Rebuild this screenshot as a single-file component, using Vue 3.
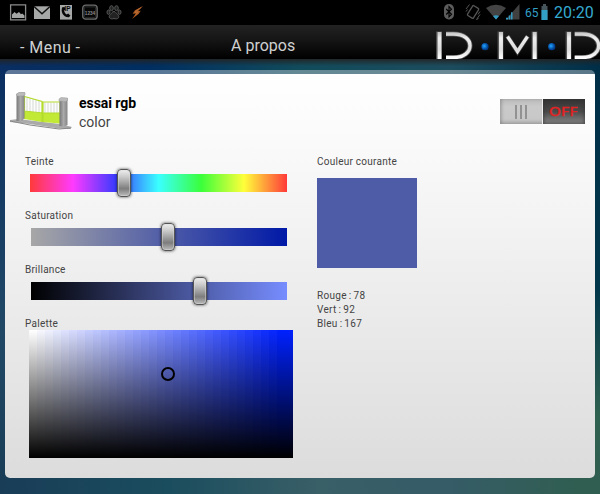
<script setup>
import { ref, computed } from 'vue'

const hue = ref(94)
const saturation = ref(137)
const brightness = ref(169)
const rgb = ref({ red: 78, green: 92, blue: 167 })

const sliders = computed(() => [
  { label: 'Teinte', kind: 'hue', offset: hue.value },
  { label: 'Saturation', kind: 'saturation', offset: saturation.value },
  { label: 'Brillance', kind: 'brightness', offset: brightness.value },
])

// The palette is painted as 33 saturation columns fading to black.
const columns = Array.from({ length: 33 }, (_, i) => {
  const t = Math.min(1, i / 31)
  return `rgb(${Math.round(255 * (1 - t))}, ${Math.round(255 - 222 * t)}, 255)`
})
const swatch = computed(() => `rgb(${rgb.value.red}, ${rgb.value.green}, ${rgb.value.blue})`)
</script>

<template>
  <div class="screen">
    <div class="status">
      <div class="notifications">
        <svg class="ic" width="18" height="18" viewBox="0 0 18 18">
          <path d="M1.6 1.800h15v15h-15z" fill="none" stroke="#8a8c8b" stroke-width="1.300" />
          <path d="M3 15V11.500L5.500 9l2 1.700L10 9l2 2.200 1.200-.6 2.300 2V15z" fill="#a3a5a4" />
        </svg>
        <svg class="ic mail" width="18" height="18" viewBox="0 0 18 18">
          <path d="M1 3.300h16v12.700H1z" fill="#a6a8a7" />
          <path d="M1 3.500l8 7.200 8-7.200" fill="none" stroke="#111" stroke-width="1.500" />
        </svg>
        <svg class="ic call" width="14" height="18" viewBox="0 0 14 18">
          <path d="M1 2h12v14.600H1z" fill="#a6a8a7" />
          <path d="M3.300 4.200C1.300 8 4 14.500 9.800 14.200l1.700-1.500-2.300-2.300-1.500 1C6.300 10.700 5.200 8.700 5.100 7.500l1.300-.9-.8-2.600z" fill="#080808" />
          <text x="5.500" y="8" class="ip">IP</text>
        </svg>
        <svg class="ic lock" width="18" height="18" viewBox="0 0 18 18">
          <rect x="1.700" y="2.200" width="14.500" height="14" rx="3" fill="#151616" stroke="#6a6c6b" stroke-width="1.300" />
          <rect x="3.500" y="4" width="11" height="10.400" rx="1" fill="#050505" stroke="#303231" stroke-width=".7" />
          <text x="3.800" y="11.500" class="digits">1234</text>
        </svg>
        <svg class="ic paw" width="16" height="18" viewBox="0 0 16 18" fill="#222" stroke="#565857" stroke-width="1">
          <ellipse cx="5.500" cy="5.200" rx="1.800" ry="2.500" />
          <ellipse cx="10.500" cy="5.200" rx="1.800" ry="2.500" />
          <ellipse cx="2.500" cy="9.200" rx="1.500" ry="2.200" />
          <ellipse cx="13.500" cy="9.200" rx="1.500" ry="2.200" />
          <path d="M8 8.500c-2 0-2.300 2-3.700 3-2.700 3 .2 5.300 3.700 4 3.500 1.300 6.400-1 3.700-4-1.700-1-2-3-3.700-3z" />
        </svg>
        <svg class="ic bolt" width="14" height="18" viewBox="0 0 14 18">
          <path d="M13 3L5 7.300 2.600 10.800l3.200-.4L2 16l6.800-5.200 1.900-3.100-2.600.2z" fill="#a9561e" />
          <path d="M11.200 4.500L6 7.800l-1 1.700 3-.6-2.500 3.500" fill="none" stroke="#c0763f" stroke-width=".7" />
        </svg>
      </div>
      <div class="system">
        <svg class="bluetooth" width="12" height="16" viewBox="0 0 12 16">
          <rect x="1" width="10" height="15.500" rx="4.800" fill="#5c5c5c" />
          <path d="M3.200 5l5.300 5.300L6 12.800V2.700l2.500 2.500-5.300 5.300" fill="none" stroke="#000" stroke-width="1.100" />
        </svg>
        <svg class="vibrate" width="16" height="18" viewBox="0 0 16 18" fill="none" stroke="#555">
          <rect x="4.500" y="2.200" width="7" height="11.500" rx="1" transform="rotate(32 8 8)" stroke-width="1.300" />
          <path d="M1 5l3.500-4.500M1 7.500L2.500 5.500M15 10.500L11.500 15.500M15 7.500l-2 3M13.500 14L11.500 16" />
        </svg>
        <svg class="wifi" width="20" height="16" viewBox="0 0 20 16">
          <path d="M0 4Q10-2.500 20 4L10 15.500z" fill="#444" />
          <path d="M7 12Q10 10.500 13 12L10 15.500z" fill="#329ac0" />
        </svg>
        <svg class="signal" width="14" height="16" viewBox="0 0 14 16">
          <path d="M13.500 0v15.500H0z" fill="#404040" />
          <path d="M0 15.500v-1.800h2v1.800zM2.700 15.500v-4.100h1.600v4.100zM5 15.500V8.200h1.500v7.300z" fill="#329ac0" />
        </svg>
        <span class="percent">65</span>
        <svg class="battery" width="7" height="16" viewBox="0 0 7 16">
          <path d="M2 0h3v2h1.500v14H.5V2H2z" fill="#45555b" />
          <path d="M.5 6h6v10h-6z" fill="#329fc5" />
        </svg>
        <span class="clock">20:20</span>
      </div>
    </div>

    <header class="bar">
      <span class="menu">- Menu -</span>
      <span class="about">A propos</span>
      <svg class="logo" width="170" height="34" viewBox="430 25 170 34">
        <defs>
          <linearGradient id="metal" x1="0" y1="31" x2="0" y2="59" gradientUnits="userSpaceOnUse">
            <stop offset="0" stop-color="#bbb" />
            <stop offset=".25" stop-color="#eee" />
            <stop offset=".65" stop-color="#ddd" />
            <stop offset="1" stop-color="#fff" />
          </linearGradient>
          <radialGradient id="bead" cx=".4" cy=".4">
            <stop offset="0" stop-color="#22a5ff" />
            <stop offset="1" stop-color="#003f91" />
          </radialGradient>
        </defs>
        <g fill="none" stroke="#555" stroke-width="5.800">
          <path d="M439 31.500v28M500.500 31.500v28M534.500 31.500v28M568.500 31.500v28" />
          <path d="M446 34h7.500C475.500 34 475.500 57.500 453.500 57.500h-7.500M574.700 34h7.500c22 0 22 23.500 0 23.500h-7.500" stroke-width="5" />
          <path d="M507.300 36l10.200 15.800 10.300-15.800" stroke-width="4.600" stroke-opacity=".7" />
        </g>
        <g fill="none" stroke="url(#metal)" stroke-width="3.900">
          <path d="M439.500 32v27.300M501 32v27.300M534.700 32v27.300M569 32v27.300" />
          <path d="M446 34h7.500C475.500 34 475.500 57.500 453.500 57.500h-7.500M574.700 34h7.500c22 0 22 23.500 0 23.500h-7.500" stroke-width="3.400" />
          <path d="M507.500 36.500l10 15 10-15" stroke-width="3.300" />
        </g>
        <circle cx="485" cy="46.700" r="3.600" fill="url(#bead)" />
        <circle cx="551.700" cy="46.700" r="3.600" fill="url(#bead)" />
      </svg>
    </header>

    <main class="stage">
      <section class="panel">
        <div class="device">
          <svg class="gate" width="64" height="40" viewBox="0 0 64 40">
            <defs>
              <linearGradient id="pillar">
                <stop offset="0" stop-color="#777" />
                <stop offset=".5" stop-color="#aaa" />
                <stop offset="1" stop-color="#858585" />
              </linearGradient>
            </defs>
            <path d="M0 29l8-1 42 5 12 3-2 2-11-.5L20 33 0 31z" fill="#aaa" />
            <path d="M0 30l20 4 29 4 12-1" fill="none" stroke="#888" />
            <path d="M14 20l18 2 18 0v10.500L32 31l-18-3z" fill="#c2e936" />
            <path d="M17 6.500V20M20 7v14M23 8v13M26 9v13M29 10v12M35 11.500v10.500M38 11.500v10.500M41 11.500v10.500M44 11.500v10.500M47 11.500v10.500" stroke="#d5d9d2" stroke-width="1" />
            <path d="M14.500 28V5.500L32 10.500V31M33 10.500v20.500M33 11h17v21.500M14 20l19 2h17" fill="none" stroke="#b3dc2c" stroke-width="1.200" />
            <path d="M6.500 3L9 1.500h5.500V27L12 30H6.500z" fill="url(#pillar)" />
            <path d="M6.500 3L9 1.500h6v2.500l-2 1H7z" fill="#bbb" stroke="#999" stroke-width=".5" />
            <path d="M49.500 8.500l2-1.500 6 .5V34l-3 1.500-5-.5z" fill="url(#pillar)" />
            <path d="M49 8L51 6.500l6.500.5V9.500l-2 1-6.500-.5z" fill="#bbb" stroke="#999" stroke-width=".5" />
          </svg>
          <div class="names">
            <strong>essai rgb</strong>
            <span>color</span>
          </div>
          <div class="toggle">
            <div class="grip"><i></i><i></i><i></i></div>
            <div class="off"><span>OFF</span></div>
          </div>
        </div>

        <div class="content">
          <div class="controls">
            <div v-for="s in sliders" :key="s.kind" class="control">
              <label>{{ s.label }}</label>
              <div class="track" :class="s.kind">
                <div class="thumb" :style="{ left: s.offset + 'px' }"></div>
              </div>
            </div>
            <label class="palette-label">Palette</label>
            <div class="palette">
              <div v-for="(c, i) in columns" :key="i" class="column" :style="{ backgroundColor: c }"></div>
              <div class="ring"></div>
            </div>
          </div>

          <div class="current">
            <label>Couleur courante</label>
            <div class="swatch" :style="{ backgroundColor: swatch }"></div>
            <div class="values">
              <span>Rouge : {{ rgb.red }}</span>
              <span>Vert : {{ rgb.green }}</span>
              <span>Bleu : {{ rgb.blue }}</span>
            </div>
          </div>
        </div>
      </section>
    </main>
  </div>
</template>

<style>
body {
  margin: 0;
  overflow: hidden;
}
</style>

<style scoped>
* {
  box-sizing: border-box;
}
.screen {
  width: 600px;
  height: 494px;
  display: flex;
  flex-direction: column;
  overflow: hidden;
  font-family: Roboto, "Noto Sans", sans-serif;
  color: #444;
}
.status {
  height: 25px;
  background: #000;
  display: flex;
  justify-content: space-between;
  flex: none;
}
svg {
  display: block;
  flex: none;
}
.notifications {
  display: flex;
  padding: 3px 0 0 9px;
}
.mail { margin-left: 6px; }
.call { margin-left: 8px; }
.lock { margin-left: 8px; }
.paw { margin-left: 7px; }
.bolt { margin-left: 8px; }
.ip {
  font: bold 6.500px "Liberation Sans", sans-serif;
  fill: #080808;
}
.digits {
  font: bold 4.700px "Liberation Sans", sans-serif;
  fill: #888;
}
.system {
  display: flex;
  align-items: flex-start;
  padding-top: 4px;
  width: 157px;
}
.vibrate { margin-left: 10px; }
.wifi { margin-left: 5px; }
.percent {
  width: 16px;
  margin-left: 5px;
  font-size: 12px;
  line-height: 18px;
  color: #329fc5;
}
.clock {
  margin-left: 6px;
  font-size: 16px;
  line-height: 17px;
  color: #35a9d1;
  white-space: nowrap;
}
.bar {
  height: 34px;
  flex: none;
  display: grid;
  grid-template-columns: 231px 199px 170px;
  background: linear-gradient(#222, #151515 45%, #000);
  color: #cfd1d0;
  font-size: 16px;
}
.menu {
  padding-left: 20px;
  letter-spacing: 0.450px;
  line-height: 46px;
}
.about {
  line-height: 42px;
}
.stage {
  height: 435px;
  padding: 11px 5px 16px;
  background:
    linear-gradient(rgba(35, 35, 35, 0.9), rgba(0, 30, 65, 0) 7px),
    linear-gradient(to right, #0a2e61 0, #002e60 25%, #114b5b 50%, #1c4c5e 75%, #002e47 100%) 0 0 / 100% 20px no-repeat,
    linear-gradient(to bottom, #0a2e61, #214966 65%, #193d57) 0 0 / 10px 419px no-repeat,
    linear-gradient(to bottom, #002e47, #02374b 55%, #2f6150 85%, #305e50) 100% 0 / 10px 419px no-repeat,
    linear-gradient(to right, #193d57, #1a4d5e 28%, #395f67 53%, #355c67 75%, #305e50 97%);
}
.panel {
  height: 408px;
  border-radius: 5px;
  padding-top: 4px;
  background:
    linear-gradient(rgba(255, 255, 255, 0.350), rgba(255, 255, 255, 0.350)) 0 0 / 100% 4px no-repeat,
    linear-gradient(#fff, #f9f9f9 20%, #dcdcdc) 0 4px / 100% 404px no-repeat;
}
.device {
  height: 80px;
  padding: 17px 10px 0 5px;
  display: flex;
  align-items: flex-start;
}
.names {
  margin: 3px auto 0 5px;
  display: flex;
  flex-direction: column;
  font-size: 14px;
  line-height: 19px;
}
.names strong {
  color: #000;
  letter-spacing: -0.050px;
}
.toggle {
  width: 85px;
  height: 25px;
  margin-top: 8px;
  display: flex;
  gap: 1px;
  background: #eee;
}
.grip {
  width: 42px;
  display: flex;
  align-items: center;
  justify-content: center;
  gap: 3px;
  background: linear-gradient(#bbb, #cacaca 30%, #c8c8c8 80%, #aaa);
  box-shadow: inset 2px 0 3px rgba(90, 90, 90, 0.350);
}
.grip i {
  width: 2px;
  height: 14px;
  background: #929292;
}
.off {
  width: 42px;
  display: flex;
  align-items: center;
  justify-content: center;
  background: linear-gradient(#333, #4a4a4a 50%, #888);
  box-shadow: inset 0 0 4px #333;
}
.off span {
  color: #e12323;
  font: 12px/12px "DejaVu Sans", sans-serif;
  -webkit-text-stroke: 0.400px #e12323;
  transform: scaleX(1.250);
}
.content {
  display: grid;
  grid-template-columns: 292px 1fr;
  padding-left: 20px;
}
label,
.values {
  display: block;
  font-size: 10px;
  line-height: 14px;
  letter-spacing: 0.250px;
}
.controls,
.current {
  padding-top: 1px;
}
.control {
  height: 54px;
}
.track {
  position: relative;
  width: 256px;
  height: 18px;
  margin: 5px 0 0 6px;
}
.hue {
  width: 257px;
  margin-left: 5px;
  background: linear-gradient(to right, #ff3a3a, #ff3aff 16.700%, #3a3aff 33.300%, #3affff 50%, #3aff3a 66.700%, #ffff3a 83.300%, #ff3a3a);
}
.saturation {
  background: linear-gradient(to right, #a7a7a7, #0019a7);
}
.brightness {
  background: linear-gradient(to right, #000, #778dff);
}
.thumb {
  position: absolute;
  top: -5px;
  width: 14px;
  height: 28px;
  margin-left: -7px;
  border: 1px solid #555;
  border-radius: 4px;
  background: linear-gradient(#eee, #ccc 25%, #7d7d7d 72%, #bbb);
  box-shadow: inset 0 0 0 1px rgba(220, 220, 220, 0.450), 0 0 3px rgba(0, 0, 0, 0.700);
}
.palette {
  position: relative;
  width: 264px;
  height: 128px;
  margin: -1px 0 0 4px;
  display: flex;
}
.column {
  width: 8px;
  background-image: linear-gradient(transparent, #000);
}
.ring {
  position: absolute;
  left: 132px;
  top: 37px;
  width: 14px;
  height: 14px;
  border: 2px solid #000;
  border-radius: 50%;
}
.swatch {
  width: 100px;
  height: 90px;
  margin-top: 9px;
}
.values {
  margin-top: 21px;
  display: flex;
  flex-direction: column;
  letter-spacing: 0.300px;
  word-spacing: -0.800px;
}
</style>
